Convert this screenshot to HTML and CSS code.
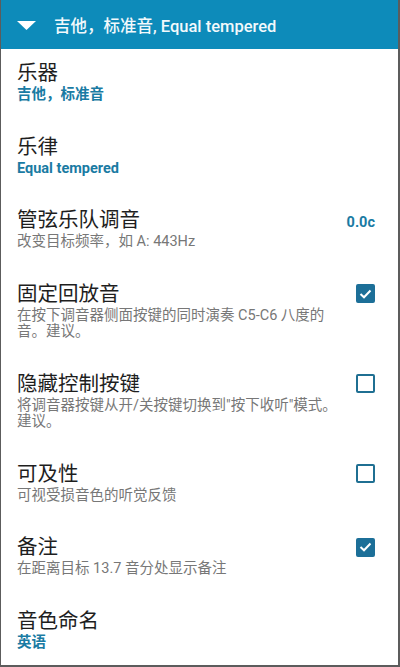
FILE: index.html
```html
<!DOCTYPE html>
<html lang="zh-CN">
<head>
<meta charset="utf-8">
<link rel="stylesheet" href="styles.css">
</head>
<body>
<div class="frame">
  <header class="bar">
    <svg class="caret" width="19" height="9" viewBox="0 0 19 9"><polygon points="0,0 19,0 9.5,9" fill="#fff"/></svg>
    <span class="bar-title">吉他，标准音, Equal tempered</span>
  </header>
  <main class="list">
    <div class="row">
      <div class="text">
        <div class="title">乐器</div>
        <div class="value">吉他，标准音</div>
      </div>
    </div>
    <div class="row">
      <div class="text">
        <div class="title">乐律</div>
        <div class="value">Equal tempered</div>
      </div>
    </div>
    <div class="row">
      <div class="text">
        <div class="title">管弦乐队调音</div>
        <div class="summary">改变目标频率，如 A: 443Hz</div>
      </div>
      <div class="widget"><span class="cents">0.0c</span></div>
    </div>
    <div class="row">
      <div class="text">
        <div class="title">固定回放音</div>
        <div class="summary">在按下调音器侧面按键的同时演奏 C5-C6 八度的音。建议。</div>
      </div>
      <div class="widget"><span class="box checked"><svg width="13" height="10" viewBox="0 0 13 10"><polyline points="1.5,5 5,8.3 11.5,1.5" fill="none" stroke="#fff" stroke-width="2"/></svg></span></div>
    </div>
    <div class="row">
      <div class="text">
        <div class="title">隐藏控制按键</div>
        <div class="summary">将调音器按键从开/关按键切换到"按下收听"模式。建议。</div>
      </div>
      <div class="widget"><span class="box"></span></div>
    </div>
    <div class="row">
      <div class="text">
        <div class="title">可及性</div>
        <div class="summary">可视受损音色的听觉反馈</div>
      </div>
      <div class="widget"><span class="box"></span></div>
    </div>
    <div class="row">
      <div class="text">
        <div class="title">备注</div>
        <div class="summary">在距离目标 13.7 音分处显示备注</div>
      </div>
      <div class="widget"><span class="box checked"><svg width="13" height="10" viewBox="0 0 13 10"><polyline points="1.5,5 5,8.3 11.5,1.5" fill="none" stroke="#fff" stroke-width="2"/></svg></span></div>
    </div>
    <div class="row">
      <div class="text">
        <div class="title">音色命名</div>
        <div class="value">英语</div>
      </div>
    </div>
  </main>
</div>
</body>
</html>
```
FILE: styles.css
```css
* { box-sizing: border-box; }
html, body { margin: 0; padding: 0; background: #fff; }
body {
  font-family: Roboto, "Noto Sans CJK SC", "Noto Sans", sans-serif;
  width: 400px;
  height: 667px;
  overflow: hidden;
}
.frame {
  width: 400px;
  height: 667px;
  border-left: 1px solid #5c5c5c;
  border-right: 2px solid #5c5c5c;
  border-bottom: 2px solid #5c5c5c;
  overflow: hidden;
  display: flex;
  flex-direction: column;
}
.bar {
  height: 49px;
  flex: none;
  background: #0d8bba;
  display: flex;
  align-items: center;
  padding-left: 16px;
}
.caret { flex: none; margin-right: 18px; margin-top: 1px; }
.bar-title {
  color: #f2f9fc;
  font-size: 16.5px;
  font-weight: 500;
}
.list { display: flex; flex-direction: column; }
.row {
  display: flex;
  align-items: flex-start;
  padding: 10px 23px 19px 16px;
}
.text { flex: 1; min-width: 0; }
.title {
  font-size: 20.5px;
  line-height: 28px;
  color: #1e1e1e;
}
.summary {
  font-size: 14.5px;
  line-height: 16.5px;
  color: #777;
}
.value {
  font-size: 14.5px;
  line-height: 16.5px;
  font-weight: 700;
  color: #1a7ba3;
}
.widget {
  flex: none;
  width: 30px;
  height: 28px;
  display: flex;
  align-items: center;
  justify-content: flex-end;
}
.cents {
  font-size: 14.5px;
  font-weight: 700;
  color: #1a7ba3;
  margin-top: 4px;
}
.box {
  width: 19px;
  height: 19px;
  border: 2px solid #1f6f92;
  border-radius: 2px;
  display: flex;
  align-items: center;
  justify-content: center;
}
.box.checked {
  background: #1c6f98;
  border-color: #1c6f98;
}
```
